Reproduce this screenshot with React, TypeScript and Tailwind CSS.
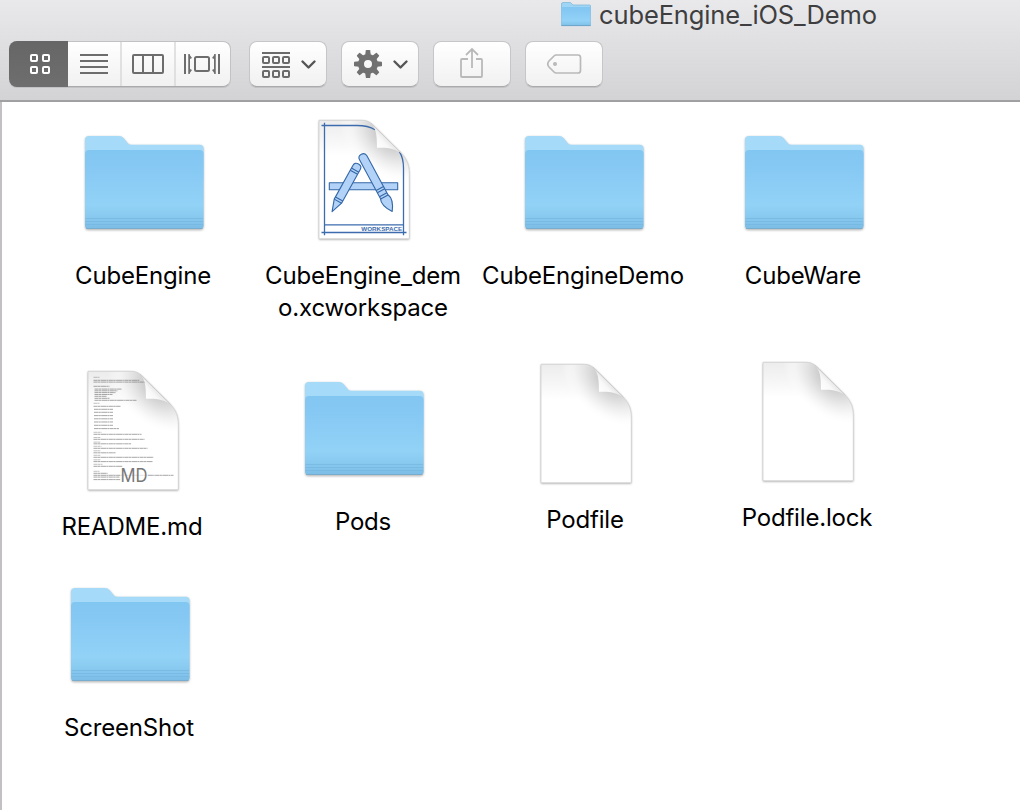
import type { ReactNode } from "react";

const FONT = "font-['Inter','Liberation_Sans',sans-serif]";

function SvgDefs() {
  return (
    <svg width="0" height="0" className="absolute">
      <defs>
        <linearGradient id="front" x1="0" y1="0" x2="0" y2="1">
          <stop offset="0" stopColor="#82c6f2" />
          <stop offset="0.2" stopColor="#85c8f3" />
          <stop offset="0.7" stopColor="#92d2f7" />
          <stop offset="0.84" stopColor="#89caf0" />
          <stop offset="1" stopColor="#7bbde6" />
        </linearGradient>
        <radialGradient id="curl" gradientUnits="userSpaceOnUse" cx="0" cy="0" r="1" gradientTransform="translate(70 14) rotate(43) scale(58 40)">
          <stop offset="0" stopColor="#c4c4c4" />
          <stop offset="0.3" stopColor="#d0d0d0" />
          <stop offset="0.5" stopColor="#e2e2e2" />
          <stop offset="0.75" stopColor="#f4f4f4" stopOpacity=".8" />
          <stop offset="1" stopColor="#ffffff" stopOpacity="0" />
        </radialGradient>
        <linearGradient id="topShade" x1="0" y1="0" x2="0" y2="1">
          <stop offset="0" stopColor="#ececec" />
          <stop offset="0.3" stopColor="#ffffff" />
        </linearGradient>
        <linearGradient id="flap" gradientUnits="userSpaceOnUse" x1="58" y1="28" x2="69" y2="18">
          <stop offset="0" stopColor="#ffffff" />
          <stop offset="0.6" stopColor="#f8f8f8" />
          <stop offset="1" stopColor="#e4e4e4" />
        </linearGradient>
      </defs>
    </svg>
  );
}

function Folder() {
  return (
    <svg viewBox="0 0 128 128" className="block size-32 overflow-visible">
      <path d="M5 107V20q0-4 4-4h29.500c2.500 0 4 .8 5.500 2.600l3.600 4.300c1.200 1.400 2.400 1.900 4.400 1.900H120q3.600 0 3.600 4V106q0 3.500-3.500 3.500h-111.600Q5 109.500 5 106z" fill="#b5b5b5" className="blur-[1.300px]" transform="translate(0 .7)" />
      <path d="M5 107V20q0-4 4-4h29.500c2.500 0 4 .8 5.500 2.600l3.600 4.300c1.200 1.400 2.400 1.900 4.400 1.900H119.600q4 0 4 4V60H5z" fill="#a5dbf9" />
      <path d="M5 34q0-4 4-4h110.600q4 0 4 4v71.500q0 3-3 3H8q-3 0-3-3z" fill="url(#front)" />
      <path d="M5.500 98.500h117.600M5.500 101.500h117.600M5.500 104.500h117.600" stroke="#74b7e0" strokeWidth="1" opacity=".7" />
      <path d="M6 108.500h116.600" stroke="#70a9cc" strokeWidth=".8" />
    </svg>
  );
}

const SHEET = "M0 0H43C49 0 52.500 3 56 6.500L80 30.500C87 37.500 90.300 43 90.300 54V118.500H0Z";

function Sheet({ children }: { children?: ReactNode }) {
  return (
    <svg viewBox="0 0 128 128" className="block size-32 overflow-visible">
      <g transform="translate(19 0.3)">
        <path d={SHEET} fill="#a0a0a0" className="blur-[1.300px]" transform="translate(0 .6)" />
        <path d={SHEET} fill="url(#topShade)" />
        <path d={SHEET} fill="url(#curl)" />
        {children}
        <path d={SHEET} fill="none" stroke="#d0d0d0" strokeWidth=".8" />
        <path d="M52 3C57 8 58 14 58 27.500C70 27 77 29 82.500 33Z" fill="url(#flap)" />
        <path d="M52 3L82.500 33" stroke="#c8c8c8" strokeWidth=".8" fill="none" />
      </g>
    </svg>
  );
}

function Workspace() {
  return (
    <Sheet>
      <g fill="none" stroke="#3c6cae" strokeWidth="1.300">
        <path d="M2.500 5.200H38C46 5.200 52 7 56 9.500M5.500 2.500V115M2.500 112.200H87.500M5.500 104.500H84.500M84.500 115V48C84.500 41 83.500 36 80.500 31.500" />
      </g>
      <text x="42.300" y="110.500" textLength="41" lengthAdjust="spacingAndGlyphs" fontSize="5.900" fontWeight="700" fill="#3c6cae" fontFamily="Liberation Sans">WORKSPACE</text>
      <g fill="#b2d3f7" stroke="#3467a8" strokeWidth="1.100" strokeLinejoin="round">
        <path d="M10.300 62.500H78.700V69.500H10.300z" />
        <g transform="translate(39.500 43.700) rotate(29)">
          <path d="M-4.200 4Q-4.200 0 0 0T4.200 4V42.500L0 54.500L-4.200 42.500Z" />
          <path d="M-4.200 7H4.200M-4.200 9.500H4.200M-4.200 40H4.200M-4.200 42.500H4.200" fill="none" />
        </g>
        <g transform="translate(42.300 34) rotate(-28.400)">
          <path d="M-4.200 4Q-4.200 0 0 0T4.200 4V48C6.500 53 5 58 0 65C-5 58-6.500 53-4.200 48Z" />
          <path d="M-4.200 39H4.200M-4.200 41.500H4.200M-4.200 46H4.200M-4.200 48.500H4.200" fill="none" />
        </g>
      </g>
    </Sheet>
  );
}

const README_LINES: number[][] = [
  [5.500, 6, 6], [5.500, 9, 46], [5.500, 10.800, 52], [5.500, 15, 16], [6.500, 17.800, 27], [6.500, 19.500, 23], [6.500, 21.300, 21],
  [6.500, 23.200, 18], [6.500, 25, 12], [6.500, 27, 15], [6.500, 29, 42], [5.500, 32, 6], [5.500, 35, 27], [6, 38, 19], [6, 41, 19],
  [6, 44.300, 19], [6, 47.500, 19], [6, 50.700, 19], [6, 54, 19], [6, 57.300, 25], [5.500, 61, 8], [5.500, 63, 48], [5.500, 66.200, 7],
  [5.500, 68, 51], [5.500, 70.800, 7], [5.500, 72.500, 38], [5.500, 75, 8], [5.500, 77, 54], [5.500, 79.500, 7], [5.500, 81.500, 22],
  [5.500, 84, 7], [5.500, 86, 60], [5.500, 88.500, 7], [5.500, 90.300, 59], [5.500, 93, 9], [5.500, 95, 29], [5.500, 100, 6],
  [5.500, 102, 14], [5.500, 104, 80], [5.500, 105.800, 26], [5.500, 108.300, 27],
];

function Readme() {
  return (
    <Sheet>
      {README_LINES.map(([x, y, w]) => (
        <path key={y} d={`M${x} ${y}h${w}`} stroke="#777" strokeWidth={w < 10 ? 0.45 : 0.65} strokeDasharray="4 .3 2.500 .4 6 .3 1.500 .4" />
      ))}
      <path d="M32 96H60V113H32z" fill="#fff" opacity=".65" />
      <text x="32.500" y="111" textLength="27" lengthAdjust="spacingAndGlyphs" fontSize="18" fill="#777" fontFamily="Inter">MD</text>
    </Sheet>
  );
}

function Item({ icon, label, className = "" }: { icon: ReactNode; label: ReactNode; className?: string }) {
  return (
    <div className={`flex w-[220px] shrink-0 flex-col items-center ${className}`}>
      {icon}
      <div className="mt-3 pr-[2px] text-center text-[24px] leading-8 tracking-[-0.18px] whitespace-nowrap text-black">{label}</div>
    </div>
  );
}

function ToolButton({ children }: { children: ReactNode }) {
  return (
    <div className="h-[46px] w-[78px] rounded-[8px] border border-[#c6c6c8] border-b-[#aaaaac] bg-linear-to-b from-white to-[#f1f1f2] shadow-[0_1px_0_#c2c2c4]">
      <svg viewBox="1 1 76 44" className="block h-[44px] w-[76px]" fill="none">{children}</svg>
    </div>
  );
}

const TEETH = [0, 45, 90, 135, 180, 225, 270, 315];

function Toolbar() {
  return (
    <div className="flex pt-[10px] pl-[9px]">
      <div className="flex h-[46px] w-[222px] rounded-[8px] border border-l-0 border-[#c2c2c4] border-b-[#aaaaac] bg-linear-to-b from-white to-[#f1f1f2] shadow-[0_1px_0_#c2c2c4]">
        <div className="-my-px h-[46px] w-[59px] shrink-0 rounded-l-[8px] bg-linear-to-b from-[#666667] to-[#6e6e6f]">
          <svg viewBox="0 0 59 46" className="block h-[46px] w-[59px]" fill="none" stroke="#fff" strokeWidth="2">
            <rect x="22" y="14" width="6" height="6" rx="1" />
            <rect x="34" y="14" width="6" height="6" rx="1" />
            <rect x="22" y="26" width="6" height="6" rx="1" />
            <rect x="34" y="26" width="6" height="6" rx="1" />
          </svg>
        </div>
        <svg viewBox="59 1 162 44" className="block h-[44px] w-[162px] shrink-0" fill="none">
          <path d="M112 0V46M166 0V46" stroke="#d9d9da" strokeWidth="1.500" />
          <g stroke="#6d6d6d" strokeWidth="2">
            <path d="M71 14H99M71 20H99M71 26H99M71 32H99" />
            <rect x="124" y="14" width="30" height="18" rx="1" />
            <path d="M134 14V32M144 14V32" />
            <rect x="186" y="16" width="14" height="14" rx="1.500" />
            <path d="M176 13V33M210 13V33" />
            <path d="M180 13V33M206 13V33" strokeWidth="1.500" />
          </g>
          <path d="M180 13L183 17L181 18V28L183 29L180 33zM206 13L203 17L205 18V28L203 29L206 33z" fill="#6d6d6d" />
        </svg>
      </div>
      <div className="ml-[18px] flex gap-[14px]">
        <ToolButton>
          <g stroke="#6b6b6b" strokeWidth="2">
            <path d="M13 12H41M13 26H41" />
            {[13, 23, 33].map((x) => (
              <g key={x}>
                <rect x={x + 1} y="16" width="6" height="6" rx="1" />
                <rect x={x + 1} y="30" width="6" height="6" rx="1" />
              </g>
            ))}
          </g>
          <path d="M53.500 20.500L59.500 26.500L65.500 20.500" stroke="#555" strokeWidth="2.400" strokeLinecap="round" strokeLinejoin="round" />
        </ToolButton>
        <ToolButton>
          <circle cx="27" cy="23" r="7" stroke="#717171" strokeWidth="6" />
          <g fill="#717171">
            {TEETH.map((a) => (
              <path key={a} d="M24.200 14L24.800 9.500Q25 9 25.500 9H28.500Q29 9 29.200 9.500L29.800 14z" transform={`rotate(${a} 27 23)`} />
            ))}
          </g>
          <path d="M53.500 20.500L59.500 26.500L65.500 20.500" stroke="#555" strokeWidth="2.400" strokeLinecap="round" strokeLinejoin="round" />
        </ToolButton>
        <ToolButton>
          <path d="M35 18H29Q28 18 28 19V35Q28 36 29 36H48Q49 36 49 35V19Q49 18 48 18H43M39 27V8M33 14L39 8L45 14" stroke="#b9b9b9" strokeWidth="1.800" />
        </ToolButton>
        <ToolButton>
          <path d="M31 14H53Q55.500 14 55.500 16.500V29.500Q55.500 32 53 32H31Q30 32 29 31L24 26Q21.500 23 24 20L29 15Q30 14 31 14z" stroke="#b9b9b9" strokeWidth="1.700" />
          <circle cx="30" cy="23" r="2" fill="#b9b9b9" />
        </ToolButton>
      </div>
    </div>
  );
}

export default function App() {
  return (
    <div className={`flex h-[810px] w-[1020px] flex-col overflow-hidden bg-white ${FONT}`}>
      <SvgDefs />
      <header className="h-[102px] shrink-0 border-b-2 border-[#a0a0a2] bg-linear-to-b from-[#e9e9eb] to-[#d3d3d5]">
        <div className="flex h-[31px] items-start pl-[561px]">
          <svg viewBox="0 0 30 25" className="mt-[2px] block h-[25px] w-[30px]">
            <path d="M.5 2Q.5.500 2 .5H9.500L12 3H28.500Q29.500 3 29.500 4V23.500H.5z" fill="#9fd5f4" stroke="#83b9d9" strokeWidth=".8" />
            <path d="M.5 5H29.500V23Q29.500 24 28.500 24H1.500Q.5 24 .5 23z" fill="url(#front)" />
            <path d="M.5 23.600H29.500" stroke="#6da5c8" />
          </svg>
          <div className="-mt-px ml-[8px] text-[25.5px] leading-8 tracking-[-0.12px] whitespace-nowrap text-[#3e3e40]">cubeEngine_iOS_Demo</div>
        </div>
        <Toolbar />
      </header>
      <main className="flex grow flex-col border-l-2 border-[#c3bfc2] pt-[18px]">
        <div className="flex h-[242px] shrink-0 items-start pl-8">
          <Item icon={<Folder />} label="CubeEngine" />
          <Item icon={<Workspace />} label={<>CubeEngine_dem<br />o.xcworkspace</>} />
          <Item icon={<Folder />} label="CubeEngineDemo" />
          <Item icon={<Folder />} label="CubeWare" />
        </div>
        <div className="flex h-[210px] shrink-0 items-start pl-[21px]">
          <Item icon={<Readme />} label="README.md" className="mt-[9px]" />
          <Item icon={<Folder />} label="Pods" className="mt-1 ml-[11px]" />
          <Item icon={<Sheet />} label="Podfile" className="mt-[2px] ml-[2px]" />
          <Item icon={<Sheet />} label="Podfile.lock" className="ml-[2px]" />
        </div>
        <div className="flex items-start pl-[18px]">
          <Item icon={<Folder />} label="ScreenShot" />
        </div>
      </main>
    </div>
  );
}
